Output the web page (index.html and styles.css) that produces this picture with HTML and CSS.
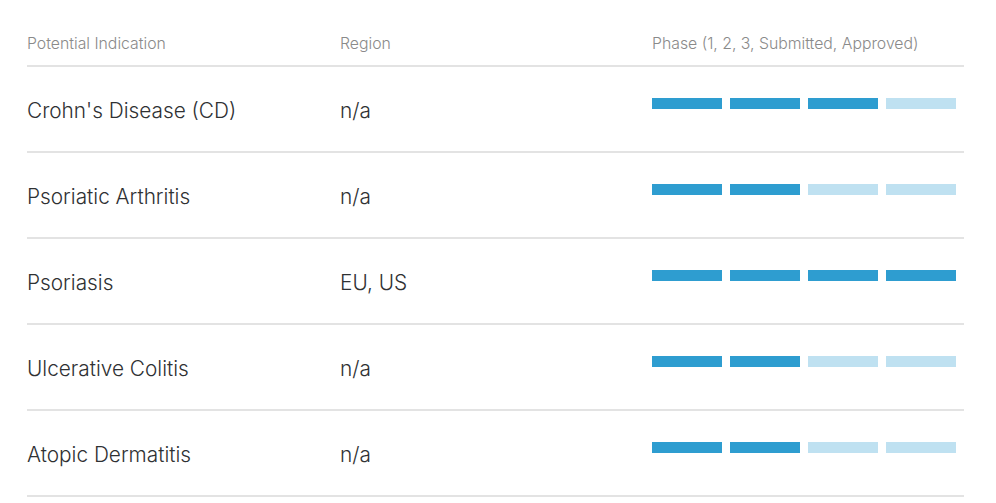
FILE: index.html
```html
<!DOCTYPE html>
<html>
<head>
<meta charset="utf-8">
<link rel="stylesheet" href="styles.css">
</head>
<body>
<div class="table">
  <div class="row head">
    <div class="cell">Potential Indication</div>
    <div class="cell">Region</div>
    <div class="cell">Phase (1, 2, 3, Submitted, Approved)</div>
  </div>
  <div class="row">
    <div class="cell">Crohn's Disease (CD)</div>
    <div class="cell">n/a</div>
    <div class="cell phases"><span class="bar on"></span><span class="bar on"></span><span class="bar on"></span><span class="bar"></span></div>
  </div>
  <div class="row">
    <div class="cell">Psoriatic Arthritis</div>
    <div class="cell">n/a</div>
    <div class="cell phases"><span class="bar on"></span><span class="bar on"></span><span class="bar"></span><span class="bar"></span></div>
  </div>
  <div class="row">
    <div class="cell">Psoriasis</div>
    <div class="cell">EU, US</div>
    <div class="cell phases"><span class="bar on"></span><span class="bar on"></span><span class="bar on"></span><span class="bar on"></span></div>
  </div>
  <div class="row">
    <div class="cell">Ulcerative Colitis</div>
    <div class="cell">n/a</div>
    <div class="cell phases"><span class="bar on"></span><span class="bar on"></span><span class="bar"></span><span class="bar"></span></div>
  </div>
  <div class="row">
    <div class="cell">Atopic Dermatitis</div>
    <div class="cell">n/a</div>
    <div class="cell phases"><span class="bar on"></span><span class="bar on"></span><span class="bar"></span><span class="bar"></span></div>
  </div>
</div>
</body>
</html>
```
FILE: styles.css
```css
html, body {
  margin: 0;
  padding: 0;
  background: #fff;
}
body {
  font-family: "Inter", "Liberation Sans", sans-serif;
  font-weight: 300;
  color: #2f3133;
}
.table {
  width: 937px;
  margin-left: 27px;
}
.row {
  display: grid;
  grid-template-columns: 313px 312px 312px;
  align-items: center;
  height: 84px;
  border-bottom: 2px solid #e3e3e3;
  font-size: 20.8px;
}
.row .cell {
  padding-top: 3px;
}
.row.head {
  height: 65px;
  align-items: end;
  font-size: 15.8px;
  color: #8a8a8a;
}
.row.head .cell {
  padding-top: 0;
  padding-bottom: 12px;
}
.row .phases {
  display: flex;
  gap: 8px;
  padding-top: 0;
  margin-bottom: 12px;
}
.bar {
  display: block;
  width: 70px;
  height: 11px;
  background: #bfe1f1;
}
.bar.on {
  background: #2e9dd0;
}
```
